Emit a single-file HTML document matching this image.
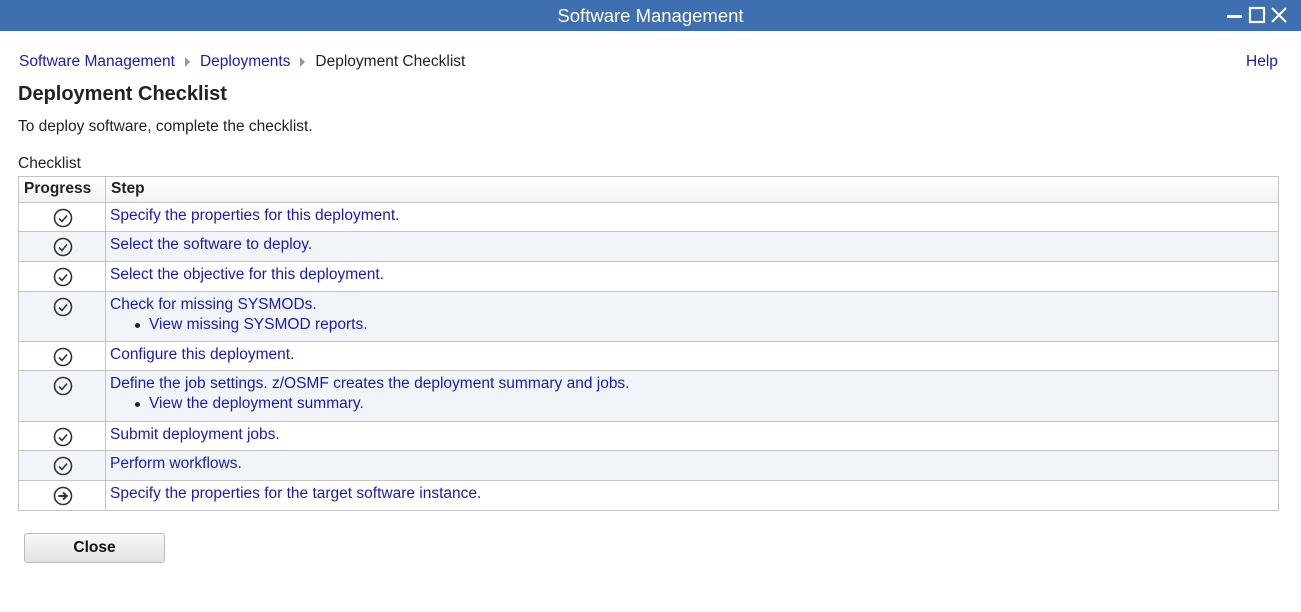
<!DOCTYPE html>
<html><head><style>
body{margin:0;width:1301px;height:612px;background:#fff;font-family:"Liberation Sans",Arial,sans-serif;font-size:15.5px;color:#222;position:relative;overflow:hidden}
.tb{position:absolute;left:0;top:0;width:1301px;height:31px;background:#3d6fb1;color:#fff;font-size:18.5px;text-align:center;line-height:31px}
.a{color:#1b1bb0}
.abs{position:absolute;white-space:nowrap}
.tri{display:inline-block;width:0;height:0;border-left:5px solid #999;border-top:5px solid transparent;border-bottom:5px solid transparent;margin:0 10px 0 10px;vertical-align:-1px}
.tbl{position:absolute;left:18px;top:176px;width:1259px;height:333px;border:1px solid #c4c4c4}
.r{position:absolute;left:0;width:1259px;border-top:1px solid #c4c4c4}
.r.alt{background:#f1f5fa}
.vl{position:absolute;left:86px;top:0;width:1px;height:333px;background:#c4c4c4}
.ic{position:absolute;left:34px;top:5px}
.t{position:absolute;left:91px;top:4px;color:#1b1bb0;white-space:nowrap}
.sub{position:absolute;left:130px;top:24px;color:#1b1bb0;white-space:nowrap}
.sub:before{content:"";position:absolute;left:-14px;top:7px;width:5px;height:5px;border-radius:50%;background:#222}
.btn{position:absolute;left:24px;top:533px;width:139px;height:28px;border:1px solid #bbb;border-radius:3px;background:linear-gradient(#f8f8f8,#e2e2e2);font-weight:bold;font-size:15.5px;text-align:center;line-height:27px;color:#111}
</style></head><body>
<div class="tb">Software Management</div>
<svg class="abs" style="left:1226px;top:6px" width="74" height="20"><rect x="1" y="9" width="15" height="3" fill="#fff"/><rect x="24" y="2" width="14" height="14" fill="none" stroke="#fff" stroke-width="2.2"/><path d="M46 2L60 16M60 2L46 16" stroke="#fff" stroke-width="2"/></svg>
<div class="abs" style="left:19px;top:53px;font-size:15.5px"><span class="a">Software Management</span><span class="tri"></span><span class="a">Deployments</span><span class="tri"></span><span>Deployment Checklist</span></div>
<div class="abs a" style="left:1246px;top:53px;font-size:15.5px">Help</div>
<div class="abs" style="left:18px;top:83px;font-size:20px;font-weight:bold">Deployment Checklist</div>
<div class="abs" style="left:18px;top:118px">To deploy software, complete the checklist.</div>
<div class="abs" style="left:18px;top:155px">Checklist</div>
<div class="tbl">
<div class="r" style="top:0;height:25px;border-top:none;background:linear-gradient(#fff,#f3f3f3)"><span class="abs" style="left:5px;top:3px;font-weight:bold">Progress</span><span class="abs" style="left:92px;top:3px;font-weight:bold">Step</span></div>
<div class="r" style="top:25px;height:29px"><svg class="ic" width="20" height="20"><circle cx="10" cy="10" r="8.5" fill="none" stroke="#333" stroke-width="1.6"/><path d="M6 10.5l3 3 5-6" fill="none" stroke="#333" stroke-width="1.6"/></svg><span class="t">Specify the properties for this deployment.</span></div>
<div class="r alt" style="top:54px;height:29px"><svg class="ic" width="20" height="20"><circle cx="10" cy="10" r="8.5" fill="none" stroke="#333" stroke-width="1.6"/><path d="M6 10.5l3 3 5-6" fill="none" stroke="#333" stroke-width="1.6"/></svg><span class="t">Select the software to deploy.</span></div>
<div class="r" style="top:84px;height:29px"><svg class="ic" width="20" height="20"><circle cx="10" cy="10" r="8.5" fill="none" stroke="#333" stroke-width="1.6"/><path d="M6 10.5l3 3 5-6" fill="none" stroke="#333" stroke-width="1.6"/></svg><span class="t">Select the objective for this deployment.</span></div>
<div class="r alt" style="top:114px;height:49px"><svg class="ic" width="20" height="20"><circle cx="10" cy="10" r="8.5" fill="none" stroke="#333" stroke-width="1.6"/><path d="M6 10.5l3 3 5-6" fill="none" stroke="#333" stroke-width="1.6"/></svg><span class="t">Check for missing SYSMODs.</span><span class="sub">View missing SYSMOD reports.</span></div>
<div class="r" style="top:164px;height:29px"><svg class="ic" width="20" height="20"><circle cx="10" cy="10" r="8.5" fill="none" stroke="#333" stroke-width="1.6"/><path d="M6 10.5l3 3 5-6" fill="none" stroke="#333" stroke-width="1.6"/></svg><span class="t">Configure this deployment.</span></div>
<div class="r alt" style="top:193px;height:50px"><svg class="ic" width="20" height="20"><circle cx="10" cy="10" r="8.5" fill="none" stroke="#333" stroke-width="1.6"/><path d="M6 10.5l3 3 5-6" fill="none" stroke="#333" stroke-width="1.6"/></svg><span class="t">Define the job settings. z/OSMF creates the deployment summary and jobs.</span><span class="sub">View the deployment summary.</span></div>
<div class="r" style="top:244px;height:29px"><svg class="ic" width="20" height="20"><circle cx="10" cy="10" r="8.5" fill="none" stroke="#333" stroke-width="1.6"/><path d="M6 10.5l3 3 5-6" fill="none" stroke="#333" stroke-width="1.6"/></svg><span class="t">Submit deployment jobs.</span></div>
<div class="r alt" style="top:273px;height:29px"><svg class="ic" width="20" height="20"><circle cx="10" cy="10" r="8.5" fill="none" stroke="#333" stroke-width="1.6"/><path d="M6 10.5l3 3 5-6" fill="none" stroke="#333" stroke-width="1.6"/></svg><span class="t">Perform workflows.</span></div>
<div class="r" style="top:303px;height:30px"><svg class="ic" width="20" height="20"><circle cx="10" cy="10" r="8.5" fill="none" stroke="#333" stroke-width="1.6"/><path d="M5.5 10h8M10 6.5l3.8 3.5-3.8 3.5" fill="none" stroke="#333" stroke-width="2"/></svg><span class="t">Specify the properties for the target software instance.</span></div>
<div class="vl"></div>
</div>
<div class="btn">Close</div>
</body></html>
